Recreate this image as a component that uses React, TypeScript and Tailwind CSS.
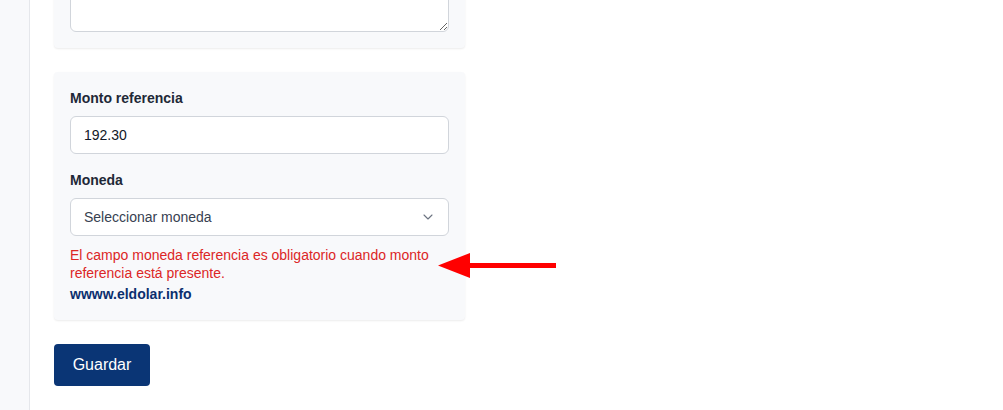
export default function App() {
  return (
    <div
      className="relative flex h-[410px] w-[1003px] overflow-hidden bg-white"
      style={{ fontFamily: '"Liberation Sans", Arial, sans-serif' }}
    >
      {/* Sidebar edge */}
      <div className="w-[30px] shrink-0 border-r border-[#e5e7eb] bg-[#f8f9fb]" />

      {/* Form column */}
      <div className="flex w-[411px] flex-col pl-[24px] box-content">
        {/* Previous card (cut off) */}
        <div className="-mt-[64px] rounded-sm bg-[#f8f9fb] p-4 shadow-[0_1px_2px_rgba(0,0,0,0.08)]">
          <textarea className="block h-[80px] w-full rounded-md border border-[#d1d5db] bg-white" />
        </div>

        {/* Monto referencia card */}
        <div className="mt-6 rounded-sm bg-[#f8f9fb] p-4 shadow-[0_1px_2px_rgba(0,0,0,0.08)]">
          <label className="mb-2 block text-sm leading-5 font-bold text-[#1f2937]">Monto referencia</label>
          <input
            defaultValue="192.30"
            className="block h-[38px] w-full rounded-md border border-[#d1d5db] bg-white px-[13px] text-sm text-[#111827] outline-none"
          />

          <label className="mt-4 mb-2 block text-sm leading-5 font-bold text-[#1f2937]">Moneda</label>
          <div className="flex h-[38px] w-full items-center justify-between rounded-md border border-[#d1d5db] bg-white pr-[12px] pl-[13px] text-sm text-[#374151]">
            <span>Seleccionar moneda</span>
            <svg width="16" height="16" viewBox="0 0 24 24" fill="none" stroke="#6b7280" strokeWidth="1.6" strokeLinecap="round" strokeLinejoin="round">
              <path d="M6 9l6 6 6-6" />
            </svg>
          </div>

          <p className="mt-[10px] text-sm leading-[18px] text-[#dc2626]">
            El campo moneda referencia es obligatorio cuando monto referencia está presente.
          </p>
          <a className="mt-[2px] block text-sm leading-5 font-bold text-[#0b2f6e]">wwww.eldolar.info</a>
        </div>

        <div className="mt-6">
          <button className="h-[42px] w-[96px] rounded bg-[#0a3575] text-base text-white">Guardar</button>
        </div>
      </div>

      {/* Annotation arrow */}
      <svg className="absolute top-[252px] left-[437px]" width="122" height="27" viewBox="0 0 122 27">
        <polygon points="1,13.5 33,1 33,26" fill="#ff0000" />
        <rect x="30" y="11" width="89" height="5" fill="#ff0000" />
      </svg>
    </div>
  );
}
